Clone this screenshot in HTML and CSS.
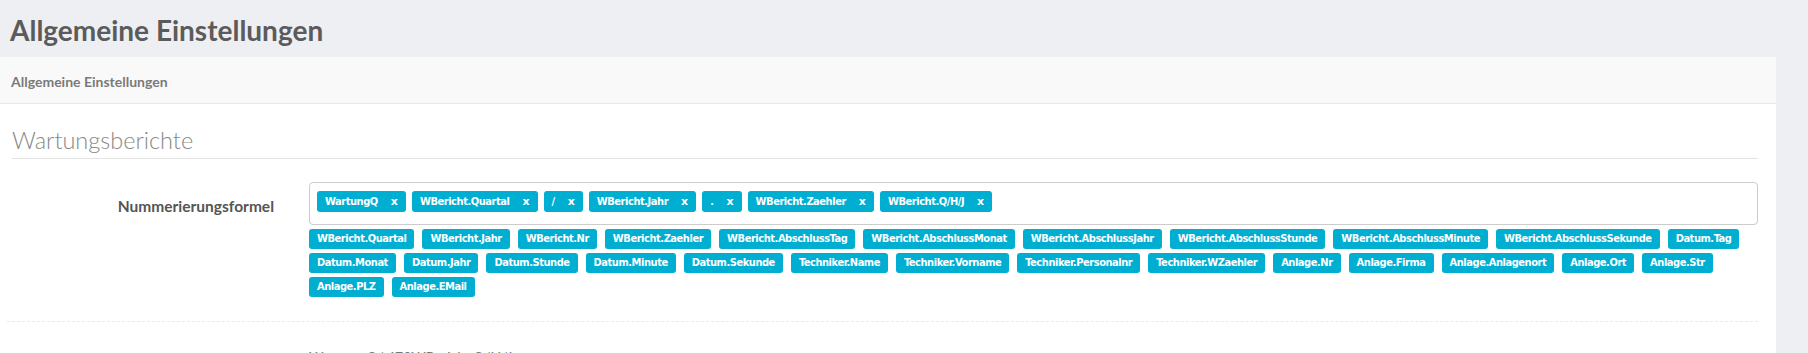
FILE: index.html
```html
<!DOCTYPE html>
<html lang="de">

<head>
    <meta charset="UTF-8">
    <title>Allgemeine Einstellungen</title>
    <link rel="stylesheet" href="styles.css">
</head>

<body>
    <div class="page">
        <h1 class="page-title">Allgemeine Einstellungen</h1>

        <div class="panel">
            <div class="panel-heading">Allgemeine Einstellungen</div>

            <div class="panel-body">
                <h3 class="section-title">Wartungsberichte</h3>

                <div class="form-group">
                    <label class="control-label" for="formula">Nummerierungsformel</label>
                    <div class="control">
                        <div class="tag-input" id="formula">
                            <span class="tag">WartungQ <span class="remove">x</span></span>
                            <span class="tag">WBericht.Quartal <span class="remove">x</span></span>
                            <span class="tag">/ <span class="remove">x</span></span>
                            <span class="tag">WBericht.Jahr <span class="remove">x</span></span>
                            <span class="tag">. <span class="remove">x</span></span>
                            <span class="tag">WBericht.Zaehler <span class="remove">x</span></span>
                            <span class="tag">WBericht.Q/H/J <span class="remove">x</span></span>
                        </div>

                        <div class="tag-list">
                            <span class="tag">WBericht.Quartal</span>
                            <span class="tag">WBericht.Jahr</span>
                            <span class="tag">WBericht.Nr</span>
                            <span class="tag">WBericht.Zaehler</span>
                            <span class="tag">WBericht.AbschlussTag</span>
                            <span class="tag">WBericht.AbschlussMonat</span>
                            <span class="tag">WBericht.AbschlussJahr</span>
                            <span class="tag">WBericht.AbschlussStunde</span>
                            <span class="tag">WBericht.AbschlussMinute</span>
                            <span class="tag">WBericht.AbschlussSekunde</span>
                            <span class="tag">Datum.Tag</span>
                            <span class="tag">Datum.Monat</span>
                            <span class="tag">Datum.Jahr</span>
                            <span class="tag">Datum.Stunde</span>
                            <span class="tag">Datum.Minute</span>
                            <span class="tag">Datum.Sekunde</span>
                            <span class="tag">Techniker.Name</span>
                            <span class="tag">Techniker.Vorname</span>
                            <span class="tag">Techniker.Personalnr</span>
                            <span class="tag">Techniker.WZaehler</span>
                            <span class="tag">Anlage.Nr</span>
                            <span class="tag">Anlage.Firma</span>
                            <span class="tag">Anlage.Anlagenort</span>
                            <span class="tag">Anlage.Ort</span>
                            <span class="tag">Anlage.Str</span>
                            <span class="tag">Anlage.PLZ</span>
                            <span class="tag">Anlage.EMail</span>
                        </div>
                    </div>
                </div>

                <div class="form-group dashed">
                    <div class="control-label"></div>
                    <div class="control">
                        <p class="static">Wartung Q/.472WBericht.Q/H/J</p>
                    </div>
                </div>
            </div>
        </div>
    </div>
</body>

</html>
```

FILE: styles.css
```css
body {
    margin: 0;
    background-color: #eeeff3;
    font-family: Lato, "Open Sans", sans-serif;
    color: #555;
}

.page {
    padding-right: 32px;
}

.page-title {
    margin: 0;
    padding: 13px 10px 0;
    height: 44px;
    font-size: 28px;
    font-weight: bold;
    color: #5b5b5b;
}

.panel {
    background-color: #fff;
    height: 296px;
    overflow: hidden;
}

.panel-heading {
    height: 47px;
    box-sizing: border-box;
    padding: 16px 11px 0;
    background-color: #f9f9f9;
    border-bottom: 1px solid #e8e8e8;
    font-size: 14px;
    font-weight: bold;
    color: #7a7a7a;
}

.panel-body {
    padding: 0 18px 0 12px;
}

.section-title {
    margin: 0;
    padding: 22px 0 4px;
    font-size: 23.5px;
    font-weight: 300;
    color: #888;
    border-bottom: 1px solid #e4e4e4;
}

.form-group {
    display: flex;
    padding-top: 23px;
}

.form-group.dashed {
    margin: 24px 0 0 -5px;
    padding-left: 5px;
    border-top: 1px dashed #eaeaea;
    padding-top: 26px;
}

.control-label {
    width: 262px;
    flex-shrink: 0;
    padding-top: 15px;
    text-align: right;
    font-size: 15.5px;
    font-weight: bold;
    color: #555;
}

.control {
    flex: 1;
    margin-left: 35px;
}

.tag-input {
    display: flex;
    flex-wrap: wrap;
    gap: 6px;
    height: 43px;
    box-sizing: border-box;
    padding: 8px 7px;
    border: 1px solid #cccccc;
    border-radius: 4px;
}

.tag {
    display: inline-block;
    height: 20px;
    line-height: 20px;
    padding: 0 8px;
    background-color: #00aed2;
    border-radius: 3px;
    color: #fff;
    font-family: "DejaVu Sans Condensed", "Liberation Sans", sans-serif;
    font-size: 11px;
    letter-spacing: -0.45px;
    font-weight: bold;
}

.tag-input .tag {
    height: 21px;
    line-height: 21px;
}

.tag .remove {
    margin-left: 10px;
    letter-spacing: 0;
    font-family: "DejaVu Sans", sans-serif;
    font-size: 11px;
}

.tag-list {
    display: flex;
    flex-wrap: wrap;
    gap: 4px 8px;
    margin-top: 4px;
}

.static {
    margin: 0;
    font-size: 14px;
    color: #777;
}
```
